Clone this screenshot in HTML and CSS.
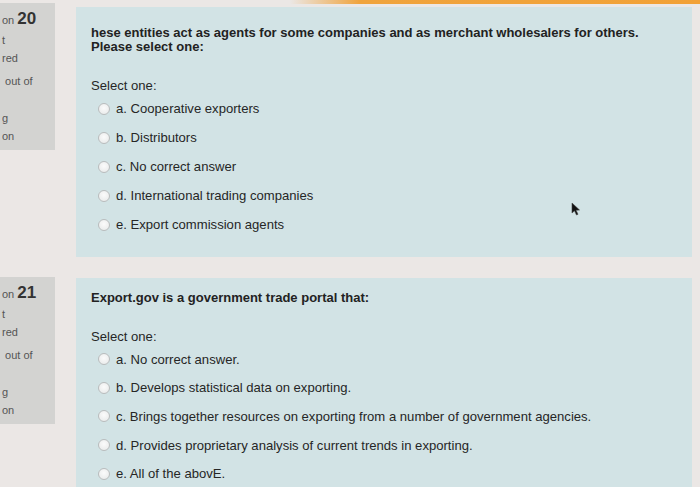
FILE: index.html
```html
<!DOCTYPE html>
<html lang="en">
<head>
<meta charset="utf-8">
<title>Quiz</title>
<link rel="stylesheet" href="styles.css">
</head>
<body>
<div class="topbar"></div>
<div class="question q-first">
  <div class="info">
    <div class="qno"><span class="pre">on</span> <span class="num">20</span></div>
    <div class="line l-state">t</div>
    <div class="line">red</div>
    <div class="line l-grade">&nbsp;out of</div>
    <div class="line l-flag">g</div>
    <div class="line">on</div>
  </div>
  <div class="content">
    <div class="qtext">hese entities act as agents for some companies and as merchant wholesalers for others.<br>Please select one:</div>
    <div class="prompt">Select one:</div>
    <div class="answers">
      <div class="opt"><span class="radio"></span>a. Cooperative exporters</div>
      <div class="opt"><span class="radio"></span>b. Distributors</div>
      <div class="opt"><span class="radio"></span>c. No correct answer</div>
      <div class="opt"><span class="radio"></span>d. International trading companies</div>
      <div class="opt"><span class="radio"></span>e. Export commission agents</div>
    </div>
  </div>
</div>
<div class="question q-second">
  <div class="info">
    <div class="qno"><span class="pre">on</span> <span class="num">21</span></div>
    <div class="line l-state">t</div>
    <div class="line">red</div>
    <div class="line l-grade">&nbsp;out of</div>
    <div class="line l-flag">g</div>
    <div class="line">on</div>
  </div>
  <div class="content">
    <div class="qtext">Export.gov is a government trade portal that:</div>
    <div class="prompt">Select one:</div>
    <div class="answers">
      <div class="opt"><span class="radio"></span>a. No correct answer.</div>
      <div class="opt"><span class="radio"></span>b. Develops statistical data on exporting.</div>
      <div class="opt"><span class="radio"></span>c. Brings together resources on exporting from a number of government agencies.</div>
      <div class="opt"><span class="radio"></span>d. Provides proprietary analysis of current trends in exporting.</div>
      <div class="opt"><span class="radio"></span>e. All of the abovE.</div>
    </div>
  </div>
</div>
<svg class="cursor" width="10" height="14" viewBox="0 0 10 14"><path d="M1 1 L1 11 L3.5 8.8 L5.5 13 L7 12.3 L5 8.2 L8.5 8 Z" fill="#111" stroke="#444" stroke-width="0.6"/></svg>
</body>
</html>
```
FILE: styles.css
```css
html, body {
  margin: 0;
  padding: 0;
}
body {
  background: #ebe7e5;
  font-family: "Liberation Sans", Arial, sans-serif;
  color: #262626;
  width: 700px;
  height: 487px;
  overflow: hidden;
  position: relative;
}
.topbar {
  height: 4px;
  background: linear-gradient(to right, rgba(240,163,58,0) 290px, #f0a33c 360px, #f2a136 100%);
}
.question {
  display: flex;
  align-items: flex-start;
  gap: 21px;
}
.q-second {
  margin-top: 20px;
}
.info {
  width: 55px;
  height: 147px;
  box-sizing: border-box;
  background: #d3d3d1;
  padding: 7px 0 0 2px;
  color: #555;
  font-size: 11px;
  line-height: 18px;
  overflow: hidden;
  white-space: nowrap;
}
.q-first .info {
  margin-top: -1px;
}
.qno {
  height: 18px;
}
.qno .pre {
  color: #555;
}
.qno .num {
  font-size: 17px;
  font-weight: bold;
  color: #333;
}
.l-state { margin-top: 3px; }
.l-grade { margin-top: 5px; }
.l-flag { margin-top: 19px; }
.content {
  width: 616px;
  background: #d2e3e5;
  box-sizing: border-box;
  padding: 0 0 18px 15px;
}
.q-first .content {
  margin-top: 3px;
  padding-top: 19px;
}
.q-first .prompt {
  margin-top: 23px;
}
.q-first .answers {
  margin-top: -1px;
}
.q-second .content {
  margin-top: 1px;
  padding-top: 13px;
  height: 220px;
}
.qtext {
  font-size: 13px;
  font-weight: bold;
  line-height: 14px;
  color: #222;
}
.prompt {
  font-size: 13.1px;
  line-height: 18px;
  margin-top: 23px;
}
.opt {
  display: flex;
  align-items: center;
  height: 29px;
  font-size: 13.1px;
  padding-left: 7px;
}
.q-second .answers {
  margin-top: -1px;
}
.q-second .opt {
  height: 28.6px;
}
.radio {
  width: 10px;
  height: 10px;
  border-radius: 50%;
  border: 1px solid #b9bcbd;
  background: radial-gradient(circle at 50% 40%, #fbfbfb, #e6e8e8);
  margin-right: 6px;
  flex: none;
}
.cursor {
  position: absolute;
  left: 571px;
  top: 202px;
}
```
